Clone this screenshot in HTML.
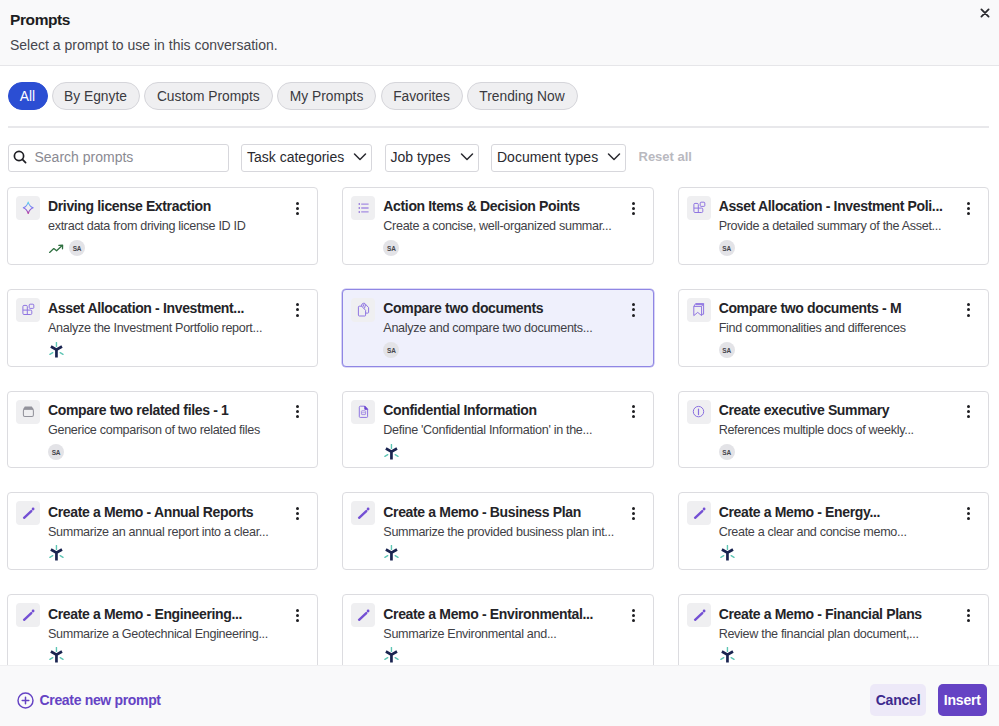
<!DOCTYPE html>
<html><head><meta charset="utf-8"><style>
*{box-sizing:border-box;margin:0;padding:0}
html,body{width:999px;height:726px;overflow:hidden;background:#fff;font-family:"Liberation Sans",sans-serif;color:#202024}
.hdr{position:absolute;left:0;top:0;width:999px;height:66px;background:#f9f9fa;border-bottom:1px solid #e6e6e9}
.h1{position:absolute;left:10px;top:11.3px;font-size:15.5px;letter-spacing:-0.4px;font-weight:700;color:#1d1d21;white-space:nowrap}
.h2{position:absolute;left:10px;top:37.1px;font-size:14px;color:#46464d;white-space:nowrap}
.close{position:absolute;left:979px;top:7px}
.pill{position:absolute;top:82px;height:28px;border-radius:14px;background:#efeff1;border:1px solid #d5d5da;font-size:13.8px;color:#3a3a40;line-height:26px;padding-top:1px;text-align:center;white-space:nowrap}
.pill.on{background:#2b4ed3;border-color:#2b4ed3;color:#fff}
.div{position:absolute;left:8px;top:126px;width:981px;height:2px;background:#e8e8eb}
.inp{position:absolute;top:143.5px;height:28px;border:1px solid #d7d7dc;border-radius:3px;background:#fff;font-size:14px;color:#2a2a30;line-height:24px;white-space:nowrap}
.inp .ph{color:#8a8a92}
.reset{position:absolute;left:638.5px;top:149px;font-size:13px;font-weight:700;color:#b9b9bf;white-space:nowrap}
.card{position:absolute;width:311.33px;height:77.85px;border:1px solid #dcdce0;border-radius:4px;background:#fff}
.card.sel{background:#eff0fc;border-color:#8f86e4;box-shadow:0 0 0 0.6px rgba(143,134,228,0.6)}
.ib{position:absolute;left:8px;top:8px;width:24px;height:24px;border-radius:4px;background:#efeff1}
.ib svg{display:block}
.tt{position:absolute;left:40px;top:10.45px;font-size:14px;letter-spacing:-0.35px;font-weight:700;color:#242428;white-space:nowrap}
.ds{position:absolute;left:40px;top:31.3px;font-size:12.6px;letter-spacing:-0.32px;color:#3f3f46;white-space:nowrap}
.bot{position:absolute;left:40px;top:52px;height:16px;width:100px}
.bot svg{position:absolute;left:0;top:4px}
.bot.egn svg{left:0px;top:0px}
.sa{position:absolute;left:0;top:0;width:16px;height:16px;border-radius:50%;background:#e3e3e7;font-size:6.5px;font-weight:700;color:#45454c;text-align:center;line-height:17.5px;letter-spacing:-0.2px}
.keb{position:absolute;left:288.2px;top:13.7px;width:4px;height:14px}
.keb i{display:block;width:3px;height:3px;border-radius:50%;background:#1e1e22;margin:0 0 2.05px 0}
.ftr{position:absolute;left:0;top:665px;width:999px;height:61px;background:#f9f9fa;border-top:1px solid #efeff1}
.cnp{position:absolute;left:39.5px;top:692px;font-size:14px;letter-spacing:-0.33px;font-weight:700;color:#6543c4;white-space:nowrap}
.btn{position:absolute;top:684px;height:32px;border-radius:5px;font-size:14px;font-weight:700;letter-spacing:-0.2px;line-height:32px;text-align:center}
</style></head><body>
<div class="hdr"><div class="h1">Prompts</div><div class="h2">Select a prompt to use in this conversation.</div>
<svg class="close" width="12" height="12" viewBox="0 0 12 12"><path d="M2.4 2.4L9.6 9.6M9.6 2.4L2.4 9.6" stroke="#2a2a2e" stroke-width="1.8" stroke-linecap="round"/></svg></div>
<div class="pill on" style="left:7.5px;width:40px">All</div>
<div class="pill" style="left:51.5px;width:88px">By Egnyte</div>
<div class="pill" style="left:144px;width:128.5px">Custom Prompts</div>
<div class="pill" style="left:277px;width:99px">My Prompts</div>
<div class="pill" style="left:380.5px;width:82px">Favorites</div>
<div class="pill" style="left:466.5px;width:111px">Trending Now</div>
<div class="div"></div>
<div class="inp" style="left:7.5px;width:221px"><svg style="position:absolute;left:4.8px;top:5.4px" width="14" height="14" viewBox="0 0 14 14" fill="none" stroke="#1f1f24" stroke-width="1.7" stroke-linecap="round"><circle cx="6" cy="6" r="4.6"/><path d="M9.4 9.4L12.6 12.6"/></svg><span class="ph" style="position:absolute;left:26px">Search prompts</span></div>
<div class="inp" style="left:241px;width:130.5px"><span style="position:absolute;left:5px">Task categories</span><svg style="position:absolute;right:4px;top:7.5px" width="14" height="10" viewBox="0 0 14 10" fill="none" stroke="#2a2a30" stroke-width="1.5" stroke-linecap="round" stroke-linejoin="round"><path d="M1.5 2L7 7.5L12.5 2"/></svg></div>
<div class="inp" style="left:384.5px;width:94px"><span style="position:absolute;left:5px">Job types</span><svg style="position:absolute;right:4px;top:7.5px" width="14" height="10" viewBox="0 0 14 10" fill="none" stroke="#2a2a30" stroke-width="1.5" stroke-linecap="round" stroke-linejoin="round"><path d="M1.5 2L7 7.5L12.5 2"/></svg></div>
<div class="inp" style="left:491px;width:135px"><span style="position:absolute;left:5px">Document types</span><svg style="position:absolute;right:4px;top:7.5px" width="14" height="10" viewBox="0 0 14 10" fill="none" stroke="#2a2a30" stroke-width="1.5" stroke-linecap="round" stroke-linejoin="round"><path d="M1.5 2L7 7.5L12.5 2"/></svg></div>
<div class="reset">Reset all</div>
<div class="card" style="left:7px;top:186.9px"><div class="ib"><svg width="24" height="24" viewBox="0 0 24 24"><defs><linearGradient id="sg" x1="0" y1="0" x2="0" y2="1"><stop offset="0" stop-color="#5fd8ee"/><stop offset="0.5" stop-color="#7d72f2"/><stop offset="1" stop-color="#b8409e"/></linearGradient></defs><path d="M12.2 6.1000000000000005 Q13.5 10.5 17.1 11.8 Q13.5 13.100000000000001 12.2 17.5 Q10.899999999999999 13.100000000000001 7.299999999999999 11.8 Q10.899999999999999 10.5 12.2 6.1000000000000005Z" fill="none" stroke="url(#sg)" stroke-width="1.15" stroke-linejoin="round"/></svg></div><div class="tt">Driving license Extraction</div><div class="ds">extract data from driving license ID ID</div><div class="bot"><svg width="16" height="10" viewBox="0 0 16 10" fill="none" stroke="#2f7040" stroke-width="1.3" stroke-linecap="round" stroke-linejoin="round"><path d="M1.6 8.4 L5.8 4.6 L8.6 6.8 L14.2 1.6"/><path d="M10.8 1.3 L14.6 1.1 L14.5 4.8"/></svg><span class="sa" style="left:21px">SA</span></div><div class="keb"><i></i><i></i><i></i></div></div>
<div class="card" style="left:342.33px;top:186.9px"><div class="ib"><svg width="24" height="24" viewBox="0 0 24 24" fill="none"><path d="M7.6 8.1h1.4M7.6 12h1.4M7.6 15.9h1.4" stroke="#8a6ad8" stroke-width="1.5"/><path d="M10.2 8.1h7.4M10.2 12h7.4M10.2 15.9h7.4" stroke="#a58de2" stroke-width="1.4"/></svg></div><div class="tt">Action Items &amp; Decision Points</div><div class="ds">Create a concise, well-organized summar...</div><div class="bot"><span class="sa">SA</span></div><div class="keb"><i></i><i></i><i></i></div></div>
<div class="card" style="left:677.67px;top:186.9px"><div class="ib"><svg width="24" height="24" viewBox="0 0 24 24" fill="none" stroke="#8a6fe0" stroke-width="0.95" stroke-linejoin="round"><path d="M6.9 12.1 V8.5 Q6.9 7.4 8 7.4 H10.2 Q11.3 7.4 11.3 8.5 V12.1 H14.7 Q15.8 12.1 15.8 13.2 V15.4 Q15.8 16.5 14.7 16.5 H8 Q6.9 16.5 6.9 15.4 Z M6.9 12.1 H11.3 V16.5"/><rect x="13.2" y="6.2" width="4.6" height="4.2" rx="0.9"/></svg></div><div class="tt">Asset Allocation - Investment Poli...</div><div class="ds">Provide a detailed summary of the Asset...</div><div class="bot"><span class="sa">SA</span></div><div class="keb"><i></i><i></i><i></i></div></div>
<div class="card" style="left:7px;top:288.75px"><div class="ib"><svg width="24" height="24" viewBox="0 0 24 24" fill="none" stroke="#8a6fe0" stroke-width="0.95" stroke-linejoin="round"><path d="M6.9 12.1 V8.5 Q6.9 7.4 8 7.4 H10.2 Q11.3 7.4 11.3 8.5 V12.1 H14.7 Q15.8 12.1 15.8 13.2 V15.4 Q15.8 16.5 14.7 16.5 H8 Q6.9 16.5 6.9 15.4 Z M6.9 12.1 H11.3 V16.5"/><rect x="13.2" y="6.2" width="4.6" height="4.2" rx="0.9"/></svg></div><div class="tt">Asset Allocation - Investment...</div><div class="ds">Analyze the Investment Portfolio report...</div><div class="bot egn"><svg width="17" height="17" viewBox="0 0 17 17"><path d="M2.9 4.5 L8.45 7.6 L14 4.5 M8.45 7.4 L8.45 15.6" stroke="#1a2450" stroke-width="2.7" fill="none" stroke-linejoin="miter"/><path d="M8.45 0.5 L8.45 4.4 M1.9 12.3 L4.7 10.7 M12.2 10.7 L15 12.3" stroke="#5ec5b4" stroke-width="1.4" stroke-linecap="round" fill="none"/></svg></div><div class="keb"><i></i><i></i><i></i></div></div>
<div class="card sel" style="left:342.33px;top:288.75px"><div class="ib"><svg width="24" height="24" viewBox="0 0 24 24" fill="none" stroke="#8a6fe0" stroke-width="0.95" stroke-linejoin="round"><path d="M10.5 8.2 Q10.5 5.3 12.4 5.3 H13.6 L17.6 9.6 V14.3 Q17.6 15.1 16.8 15.1 H14.8"/><path d="M13.4 5.4 L11.8 8.9 M14.6 6.6 L13.4 10.4"/><path d="M8.3 8.2 H10.6 L14.6 12.3 V17.2 Q14.6 18 13.8 18 H8.3 Q7.4 18 7.4 17.1 V9.1 Q7.4 8.2 8.3 8.2Z"/></svg></div><div class="tt">Compare two documents</div><div class="ds">Analyze and compare two documents...</div><div class="bot"><span class="sa">SA</span></div><div class="keb"><i></i><i></i><i></i></div></div>
<div class="card" style="left:677.67px;top:288.75px"><div class="ib"><svg width="24" height="24" viewBox="0 0 24 24" fill="none" stroke="#8a6fe0" stroke-width="0.95" stroke-linejoin="round"><path d="M6.8 8.4 H14.6 V17.6 L10.7 14.4 L6.8 17.6 Z"/><path d="M6.8 8.4 L8.6 5.6 H16.6 V16.2 L14.6 16.4 M14.6 8.4 L16.6 5.6 M8.6 6.6 H15.8"/></svg></div><div class="tt">Compare two documents - M</div><div class="ds">Find commonalities and differences</div><div class="bot"><span class="sa">SA</span></div><div class="keb"><i></i><i></i><i></i></div></div>
<div class="card" style="left:7px;top:390.6px"><div class="ib"><svg width="24" height="24" viewBox="0 0 24 24"><path d="M8.8 6.4 H15.8 L17.9 9.4 H6.9 Z" fill="#92929b"/><rect x="7.4" y="9.3" width="10" height="7.2" rx="1.4" fill="none" stroke="#92929b" stroke-width="1.05"/></svg></div><div class="tt">Compare two related files - 1</div><div class="ds">Generice comparison of two related files</div><div class="bot"><span class="sa">SA</span></div><div class="keb"><i></i><i></i><i></i></div></div>
<div class="card" style="left:342.33px;top:390.6px"><div class="ib"><svg width="24" height="24" viewBox="0 0 24 24" fill="none" stroke="#8a6fe0" stroke-width="0.95" stroke-linejoin="round"><path d="M9.4 6.2 H13.8 L16.6 9.3 V16.6 Q16.6 17.4 15.8 17.4 H9.2 Q8.3 17.4 8.3 16.5 V7.2 Q8.3 6.2 9.4 6.2Z"/><path d="M13.8 6.2 L16.6 9.3 H13.8Z" fill="#6a44d0" stroke="#6a44d0"/><rect x="10.4" y="10.8" width="4.2" height="3.8" rx="0.6" stroke="#a48ce6"/><path d="M10.4 12.7 H14.6" stroke="#a48ce6" stroke-width="0.7"/></svg></div><div class="tt">Confidential Information</div><div class="ds">Define 'Confidential Information' in the...</div><div class="bot egn"><svg width="17" height="17" viewBox="0 0 17 17"><path d="M2.9 4.5 L8.45 7.6 L14 4.5 M8.45 7.4 L8.45 15.6" stroke="#1a2450" stroke-width="2.7" fill="none" stroke-linejoin="miter"/><path d="M8.45 0.5 L8.45 4.4 M1.9 12.3 L4.7 10.7 M12.2 10.7 L15 12.3" stroke="#5ec5b4" stroke-width="1.4" stroke-linecap="round" fill="none"/></svg></div><div class="keb"><i></i><i></i><i></i></div></div>
<div class="card" style="left:677.67px;top:390.6px"><div class="ib"><svg width="24" height="24" viewBox="0 0 24 24" fill="none" stroke="#8a6fe0" stroke-width="1"><circle cx="11.5" cy="11.6" r="5.2"/><path d="M11.5 9.1 L11.5 14.6" stroke-width="1.2" stroke-linecap="round"/></svg></div><div class="tt">Create executive Summary</div><div class="ds">References multiple docs of weekly...</div><div class="bot"><span class="sa">SA</span></div><div class="keb"><i></i><i></i><i></i></div></div>
<div class="card" style="left:7px;top:492.45px"><div class="ib"><svg width="24" height="24" viewBox="0 0 24 24" fill="none" stroke="#7450d4" stroke-linecap="round"><path d="M8.1 16.8 L15.3 10.1" stroke-width="2.4"/><circle cx="17.1" cy="8" r="1.4" fill="#7450d4" stroke="none"/></svg></div><div class="tt">Create a Memo - Annual Reports</div><div class="ds">Summarize an annual report into a clear...</div><div class="bot egn"><svg width="17" height="17" viewBox="0 0 17 17"><path d="M2.9 4.5 L8.45 7.6 L14 4.5 M8.45 7.4 L8.45 15.6" stroke="#1a2450" stroke-width="2.7" fill="none" stroke-linejoin="miter"/><path d="M8.45 0.5 L8.45 4.4 M1.9 12.3 L4.7 10.7 M12.2 10.7 L15 12.3" stroke="#5ec5b4" stroke-width="1.4" stroke-linecap="round" fill="none"/></svg></div><div class="keb"><i></i><i></i><i></i></div></div>
<div class="card" style="left:342.33px;top:492.45px"><div class="ib"><svg width="24" height="24" viewBox="0 0 24 24" fill="none" stroke="#7450d4" stroke-linecap="round"><path d="M8.1 16.8 L15.3 10.1" stroke-width="2.4"/><circle cx="17.1" cy="8" r="1.4" fill="#7450d4" stroke="none"/></svg></div><div class="tt">Create a Memo - Business Plan</div><div class="ds">Summarize the provided business plan int...</div><div class="bot egn"><svg width="17" height="17" viewBox="0 0 17 17"><path d="M2.9 4.5 L8.45 7.6 L14 4.5 M8.45 7.4 L8.45 15.6" stroke="#1a2450" stroke-width="2.7" fill="none" stroke-linejoin="miter"/><path d="M8.45 0.5 L8.45 4.4 M1.9 12.3 L4.7 10.7 M12.2 10.7 L15 12.3" stroke="#5ec5b4" stroke-width="1.4" stroke-linecap="round" fill="none"/></svg></div><div class="keb"><i></i><i></i><i></i></div></div>
<div class="card" style="left:677.67px;top:492.45px"><div class="ib"><svg width="24" height="24" viewBox="0 0 24 24" fill="none" stroke="#7450d4" stroke-linecap="round"><path d="M8.1 16.8 L15.3 10.1" stroke-width="2.4"/><circle cx="17.1" cy="8" r="1.4" fill="#7450d4" stroke="none"/></svg></div><div class="tt">Create a Memo - Energy...</div><div class="ds">Create a clear and concise memo...</div><div class="bot egn"><svg width="17" height="17" viewBox="0 0 17 17"><path d="M2.9 4.5 L8.45 7.6 L14 4.5 M8.45 7.4 L8.45 15.6" stroke="#1a2450" stroke-width="2.7" fill="none" stroke-linejoin="miter"/><path d="M8.45 0.5 L8.45 4.4 M1.9 12.3 L4.7 10.7 M12.2 10.7 L15 12.3" stroke="#5ec5b4" stroke-width="1.4" stroke-linecap="round" fill="none"/></svg></div><div class="keb"><i></i><i></i><i></i></div></div>
<div class="card" style="left:7px;top:594.3px"><div class="ib"><svg width="24" height="24" viewBox="0 0 24 24" fill="none" stroke="#7450d4" stroke-linecap="round"><path d="M8.1 16.8 L15.3 10.1" stroke-width="2.4"/><circle cx="17.1" cy="8" r="1.4" fill="#7450d4" stroke="none"/></svg></div><div class="tt">Create a Memo - Engineering...</div><div class="ds">Summarize a Geotechnical Engineering...</div><div class="bot egn"><svg width="17" height="17" viewBox="0 0 17 17"><path d="M2.9 4.5 L8.45 7.6 L14 4.5 M8.45 7.4 L8.45 15.6" stroke="#1a2450" stroke-width="2.7" fill="none" stroke-linejoin="miter"/><path d="M8.45 0.5 L8.45 4.4 M1.9 12.3 L4.7 10.7 M12.2 10.7 L15 12.3" stroke="#5ec5b4" stroke-width="1.4" stroke-linecap="round" fill="none"/></svg></div><div class="keb"><i></i><i></i><i></i></div></div>
<div class="card" style="left:342.33px;top:594.3px"><div class="ib"><svg width="24" height="24" viewBox="0 0 24 24" fill="none" stroke="#7450d4" stroke-linecap="round"><path d="M8.1 16.8 L15.3 10.1" stroke-width="2.4"/><circle cx="17.1" cy="8" r="1.4" fill="#7450d4" stroke="none"/></svg></div><div class="tt">Create a Memo - Environmental...</div><div class="ds">Summarize Environmental and...</div><div class="bot egn"><svg width="17" height="17" viewBox="0 0 17 17"><path d="M2.9 4.5 L8.45 7.6 L14 4.5 M8.45 7.4 L8.45 15.6" stroke="#1a2450" stroke-width="2.7" fill="none" stroke-linejoin="miter"/><path d="M8.45 0.5 L8.45 4.4 M1.9 12.3 L4.7 10.7 M12.2 10.7 L15 12.3" stroke="#5ec5b4" stroke-width="1.4" stroke-linecap="round" fill="none"/></svg></div><div class="keb"><i></i><i></i><i></i></div></div>
<div class="card" style="left:677.67px;top:594.3px"><div class="ib"><svg width="24" height="24" viewBox="0 0 24 24" fill="none" stroke="#7450d4" stroke-linecap="round"><path d="M8.1 16.8 L15.3 10.1" stroke-width="2.4"/><circle cx="17.1" cy="8" r="1.4" fill="#7450d4" stroke="none"/></svg></div><div class="tt">Create a Memo - Financial Plans</div><div class="ds">Review the financial plan document,...</div><div class="bot egn"><svg width="17" height="17" viewBox="0 0 17 17"><path d="M2.9 4.5 L8.45 7.6 L14 4.5 M8.45 7.4 L8.45 15.6" stroke="#1a2450" stroke-width="2.7" fill="none" stroke-linejoin="miter"/><path d="M8.45 0.5 L8.45 4.4 M1.9 12.3 L4.7 10.7 M12.2 10.7 L15 12.3" stroke="#5ec5b4" stroke-width="1.4" stroke-linecap="round" fill="none"/></svg></div><div class="keb"><i></i><i></i><i></i></div></div>

<div class="ftr"></div>
<svg style="position:absolute;left:17px;top:692px" width="17" height="17" viewBox="0 0 17 17" fill="none" stroke="#6543c4" stroke-width="1.45"><circle cx="8.5" cy="8.5" r="7.5"/><path d="M8.5 5.2V11.8M5.2 8.5H11.8" stroke-linecap="round" stroke-width="1.5"/></svg>
<div class="cnp">Create new prompt</div>
<div class="btn" style="left:870px;width:56px;background:#ede9f8;color:#3d2a8e">Cancel</div>
<div class="btn" style="left:937.5px;width:49.5px;background:#6543c4;color:#fff">Insert</div>
</body></html>
